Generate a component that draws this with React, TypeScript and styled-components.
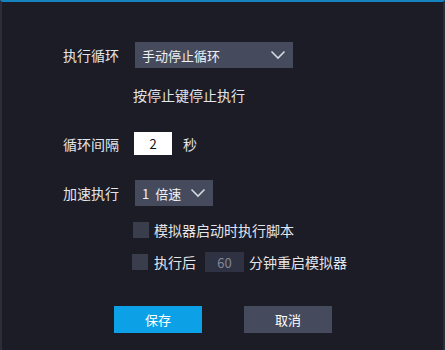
import * as React from 'react';
import styled, { createGlobalStyle } from 'styled-components';

const GlobalStyle = createGlobalStyle`
  html, body {
    margin: 0;
    padding: 0;
    background: #1b1c26;
  }
  body {
    font-family: "Noto Sans CJK SC", "Noto Sans", "Liberation Sans", sans-serif;
    color: #e4e5ea;
  }
`;

const Panel = styled.div`
  box-sizing: border-box;
  width: 445px;
  height: 350px;
  background: #1b1c26;
  border-top: 2px solid #1583c0;
  border-left: 2px solid #2a2d3a;
  border-right: 2px solid #2a2d3a;
  padding: 40px 0 0 61px;
  display: flex;
  flex-direction: column;
`;

const Row = styled.div<{ top: number; indent?: number; height?: number }>`
  display: flex;
  align-items: center;
  margin-top: ${({ top }) => top}px;
  margin-left: ${({ indent }) => indent || 0}px;
  height: ${({ height }) => height || 26}px;
`;

const Label = styled.span`
  width: 72px;
  font-size: 14px;
  line-height: 20px;
  color: #e4e5ea;
  white-space: nowrap;
`;

const Text = styled.span<{ gap?: number }>`
  font-size: 14px;
  line-height: 20px;
  color: #e4e5ea;
  margin-left: ${({ gap }) => gap || 0}px;
  white-space: nowrap;
`;

const Select = styled.div<{ width: number }>`
  box-sizing: border-box;
  width: ${({ width }) => width}px;
  height: 26px;
  background: #454a5c;
  display: flex;
  align-items: center;
  justify-content: space-between;
  padding: 0 7px 0 7px;
  font-size: 13px;
  color: #f0f1f4;
  white-space: nowrap;
  word-spacing: 3px;
`;

const Chevron = () => (
  <svg width="16" height="10" viewBox="0 0 16 10">
    <polyline points="1.5,1.5 8,8 14.5,1.5" fill="none" stroke="#d6d8df" strokeWidth="1.6" />
  </svg>
);

const NumberBox = styled.div`
  box-sizing: border-box;
  width: 38px;
  height: 23px;
  background: #ffffff;
  color: #111;
  font-size: 13px;
  display: flex;
  align-items: center;
  justify-content: center;
  margin-left: -1px;
`;

const DimBox = styled.div`
  box-sizing: border-box;
  width: 39px;
  height: 20px;
  background: #2f3242;
  color: #858896;
  font-size: 13px;
  display: flex;
  align-items: center;
  justify-content: center;
  margin-left: 9px;
`;

const Check = styled.span`
  box-sizing: border-box;
  width: 16px;
  height: 16px;
  background: #3a3d4c;
  flex: none;
`;

const Buttons = styled.div`
  display: flex;
  gap: 42px;
  margin-top: 34px;
  margin-left: 51px;
`;

const Button = styled.button<{ primary?: boolean }>`
  width: 88px;
  height: 27px;
  border: none;
  padding: 0;
  font-family: inherit;
  font-size: 13px;
  color: #ffffff;
  background: ${({ primary }) => (primary ? '#0ca1e7' : '#454a5c')};
`;

export default function App() {
  return (
    <>
      <GlobalStyle />
      <Panel>
        <Row top={0}>
          <Label>执行循环</Label>
          <Select width={158}>
            手动停止循环
            <Chevron />
          </Select>
        </Row>
        <Row top={17} indent={70} height={20}>
          <Text>按停止键停止执行</Text>
        </Row>
        <Row top={27} height={23}>
          <Label>循环间隔</Label>
          <NumberBox>2</NumberBox>
          <Text gap={11}>秒</Text>
        </Row>
        <Row top={25}>
          <Label>加速执行</Label>
          <Select width={78}>
            <span>1 倍速</span>
            <Chevron />
          </Select>
        </Row>
        <Row top={14} indent={70} height={20}>
          <Check />
          <Text gap={5}>模拟器启动时执行脚本</Text>
        </Row>
        <Row top={12} indent={69} height={20}>
          <Check />
          <Text gap={6}>执行后</Text>
          <DimBox>60</DimBox>
          <Text gap={5}>分钟重启模拟器</Text>
        </Row>
        <Buttons>
          <Button primary>保存</Button>
          <Button>取消</Button>
        </Buttons>
      </Panel>
    </>
  );
}
